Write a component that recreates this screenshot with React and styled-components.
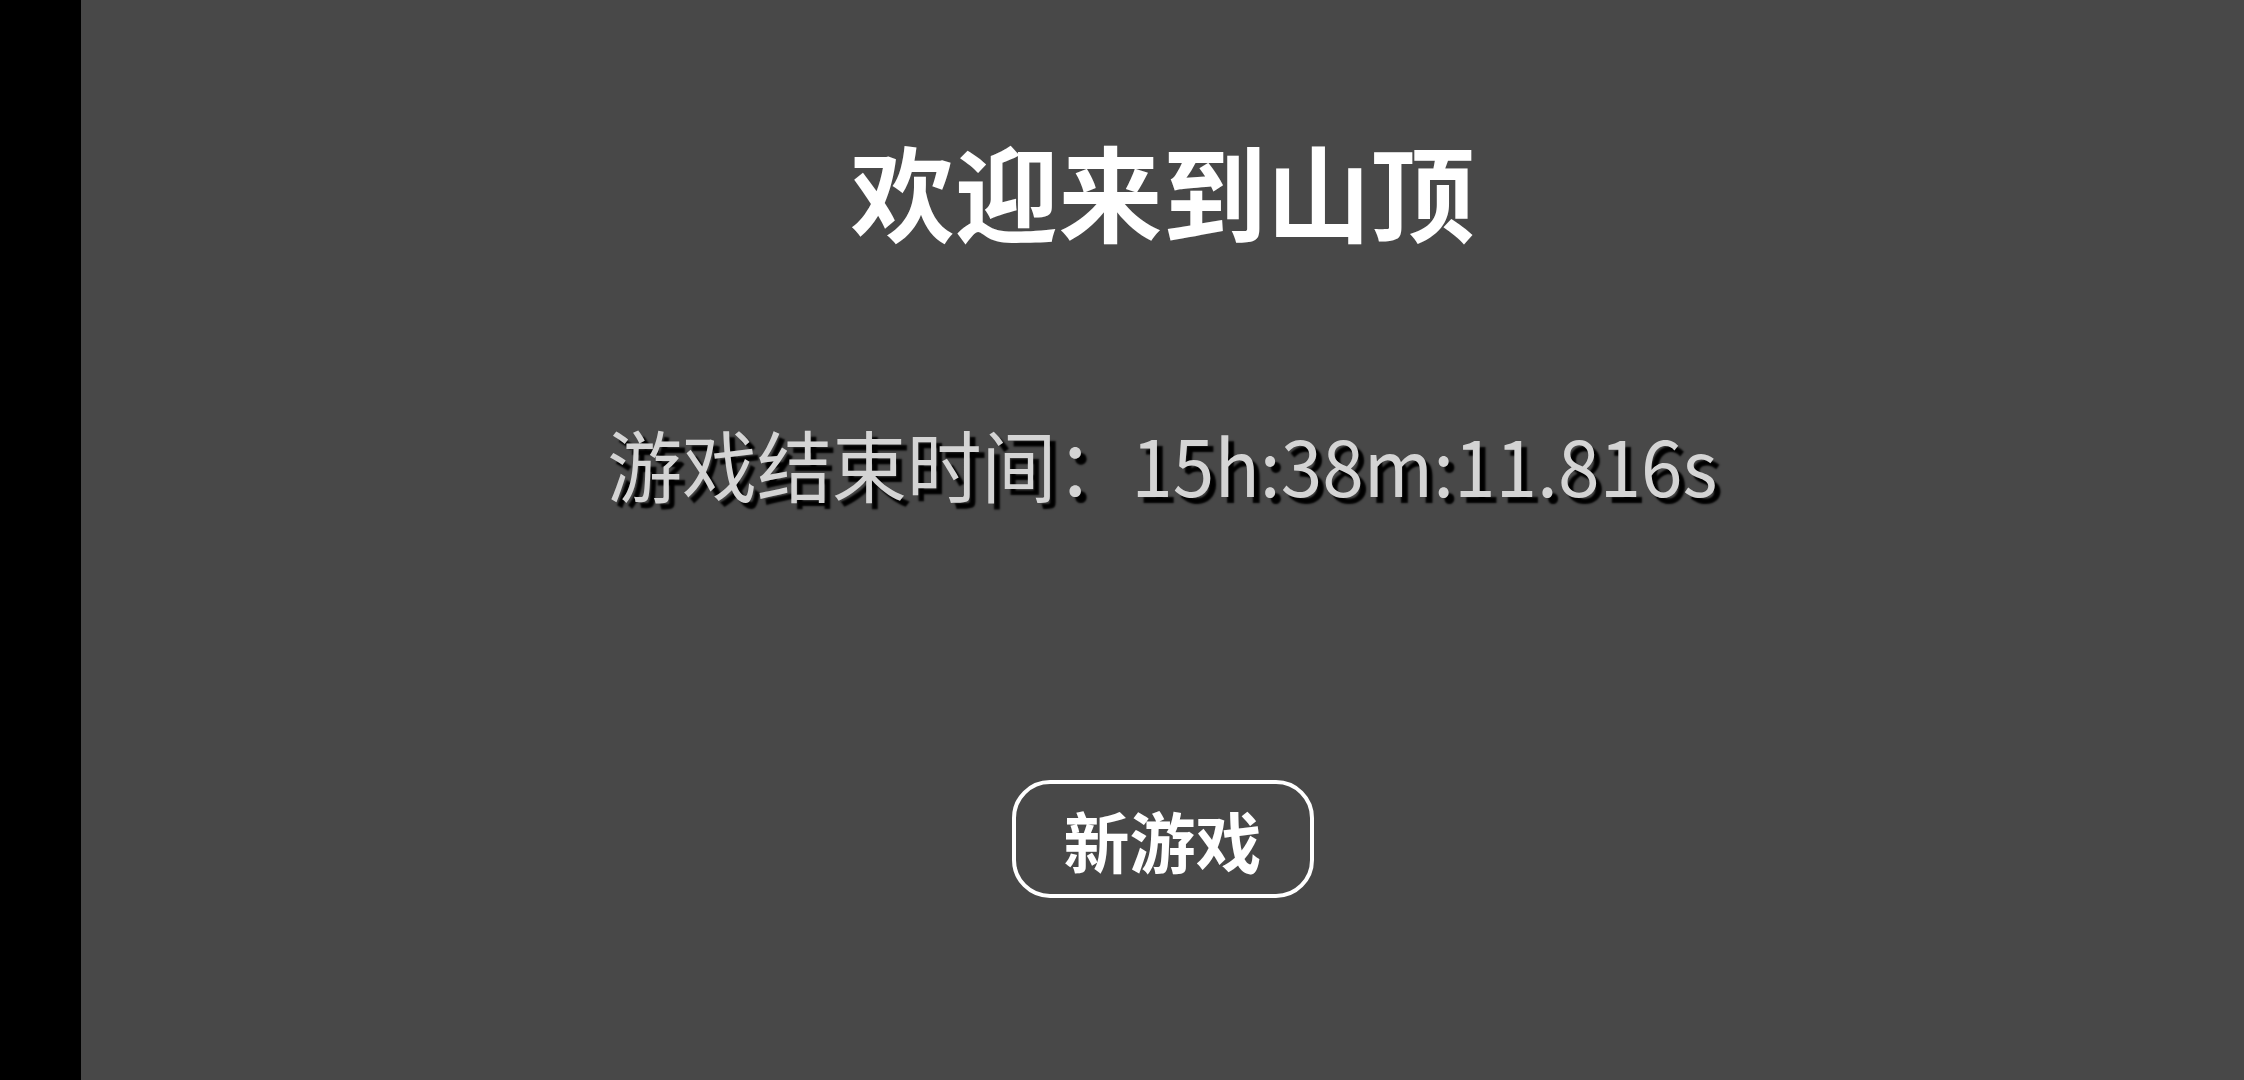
import React from 'react';
import styled, { createGlobalStyle } from 'styled-components';

const GlobalStyle = createGlobalStyle`
  html, body {
    margin: 0;
    padding: 0;
    background: #484848;
  }
  body {
    font-family: "Noto Sans CJK SC", "Noto Sans", sans-serif;
  }
`

const Screen = styled.div`
  display: flex;
  width: 2244px;
  height: 1080px;
  overflow: hidden;
`

const SideBar = styled.div`
  width: 81px;
  flex-shrink: 0;
  background: #000;
`

const Main = styled.main`
  flex: 1;
  display: flex;
  flex-direction: column;
  align-items: center;
  padding-top: 138px;
  background: #484848;
`

const Title = styled.h1`
  margin: 0;
  font-size: 104px;
  line-height: 1;
  font-weight: 700;
  color: #fff;
`

const EndTime = styled.p`
  margin: 182px 0 0;
  font-size: 78px;
  line-height: 1;
  font-weight: 400;
  color: #d4d4d4;
  text-shadow: 6px 6px 2px #000;
  transform: scaleX(0.96);
`

const NewGameButton = styled.button`
  margin-top: 278px;
  padding: 22px 48px;
  font-family: inherit;
  font-size: 66px;
  line-height: 1;
  font-weight: 700;
  color: #fff;
  background: transparent;
  border: 4px solid #fff;
  border-radius: 38px;
  cursor: pointer;
`

export default function App() {
  return (
    <>
      <GlobalStyle />
      <Screen>
        <SideBar />
        <Main>
          <Title>欢迎来到山顶</Title>
          <EndTime>游戏结束时间：15h:38m:11.816s</EndTime>
          <NewGameButton>新游戏</NewGameButton>
        </Main>
      </Screen>
    </>
  )
}
